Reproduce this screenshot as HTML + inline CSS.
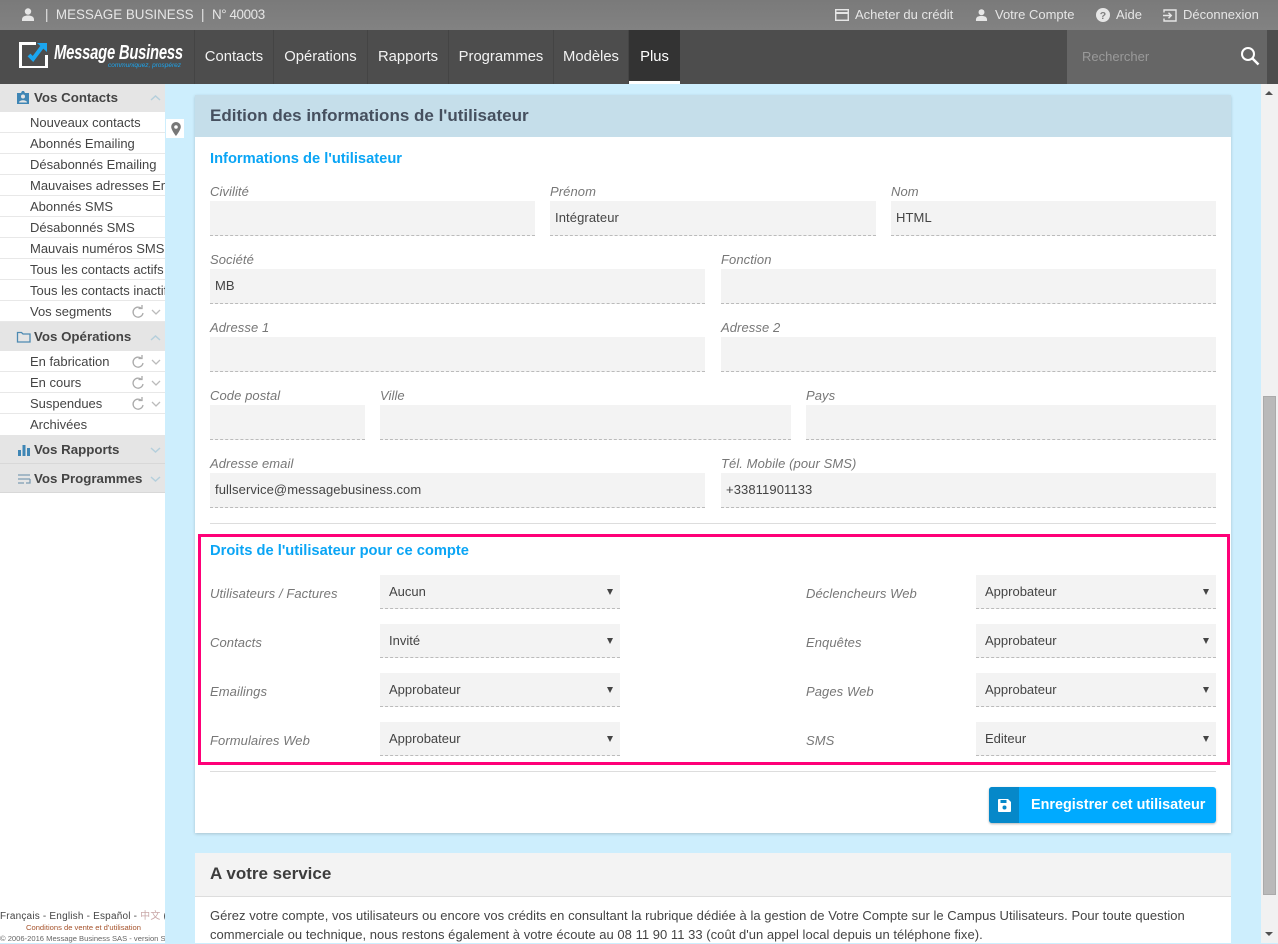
<!DOCTYPE html>
<html lang="fr"><head><meta charset="utf-8"><title>Message Business</title>
<style>
html,body{margin:0;padding:0;width:1278px;height:943px;overflow:hidden;background:#cdeefd;font-family:"Liberation Sans","Noto Sans CJK SC",sans-serif;color:#444}
div,span,svg{position:absolute;white-space:nowrap;display:block}
span.i{position:static;display:inline}
.top{color:#e6e6e6;font-size:13px;line-height:30px;top:0;height:30px}
.nav{top:30px;height:54px;line-height:55px;color:#f2f2f2;font-size:14.8px;border-right:1px solid #444;text-align:center}
.sh{left:0;width:165px;height:28px;background:#e5e5e5;border-bottom:1px solid #d8d8d8;box-sizing:content-box;font-weight:bold;font-size:13.3px;color:#444;line-height:27px;text-indent:34px}
.si{left:0;width:165px;height:20px;border-bottom:1px solid #e8e8e8;line-height:22px;font-size:13px;color:#444;text-indent:30px;overflow:hidden;background:#fff}
.l{font-style:italic;font-size:13px;color:#777;line-height:16px;height:16px;margin-top:1px;letter-spacing:.08px}
.f{height:34px;background:#f3f3f3;border-bottom:1px dashed #bbb;font-size:13px;color:#444;line-height:33px;text-indent:5px;letter-spacing:.1px}
.s{width:240px;height:33px;background:#f3f3f3;border-bottom:1px dashed #bbb;font-size:13px;color:#444;line-height:34px;text-indent:9px}
.s:after{content:"";position:absolute;right:7px;top:14px;border-left:3.5px solid transparent;border-right:3.5px solid transparent;border-top:6px solid #444}
.t{font-weight:bold;font-size:14.7px;color:#0aa5f5;line-height:18px;height:18px}
.hr{height:1px;background:#ddd;left:210px;width:1006px}
</style></head><body>

<!-- sidebar -->
<div style="left:0;top:84px;width:165px;height:859px;background:#fff;overflow:hidden"></div>
<div class="sh" style="top:84px">Vos Contacts</div>
<div class="si" style="top:112px">Nouveaux contacts</div>
<div class="si" style="top:133px">Abonnés Emailing</div>
<div class="si" style="top:154px">Désabonnés Emailing</div>
<div class="si" style="top:175px">Mauvaises adresses Emailing</div>
<div class="si" style="top:196px">Abonnés SMS</div>
<div class="si" style="top:217px">Désabonnés SMS</div>
<div class="si" style="top:238px">Mauvais numéros SMS</div>
<div class="si" style="top:259px">Tous les contacts actifs</div>
<div class="si" style="top:280px">Tous les contacts inactifs</div>
<div class="si" style="top:301px">Vos segments</div>
<div class="sh" style="top:322px;height:29px;line-height:29px">Vos Opérations</div>
<div class="si" style="top:351px">En fabrication</div>
<div class="si" style="top:372px">En cours</div>
<div class="si" style="top:393px">Suspendues</div>
<div class="si" style="top:414px;border-bottom:0">Archivées</div>
<div class="sh" style="top:435px;line-height:29px">Vos Rapports</div>
<div class="sh" style="top:464px;line-height:29px">Vos Programmes</div>

<!-- sidebar icons -->
<svg style="left:0;top:84px" width="165" height="420" viewBox="0 0 165 420" fill="none">
<path d="M17 9h4l1-2h2l1 2h4v11H17z" fill="#3f86b5"/><circle cx="23" cy="12.500" r="2" fill="#e5e5e5"/><path d="M19 18.500c0-3 8-3 8 0z" fill="#e5e5e5"/>
<path d="M151 16l4.500-4 4.500 4" stroke="#b5cfdc" stroke-width="1.500"/>
<path d="M17.500 258v-9.500h4l1.500 1.500h7v8z" stroke="#4d8ab2" stroke-width="1.300"/>
<path d="M151 256l4.500-4 4.500 4" stroke="#b5cfdc" stroke-width="1.500"/>
<path d="M18 372h3v-6h-3zM22.500 372h3v-11h-3zM27 372h3v-8h-3z" fill="#3f86b5"/>
<path d="M151 364l4.500 4 4.500-4" stroke="#b5cfdc" stroke-width="1.500"/>
<path d="M18 391h12M18 395h12M18 399h6M30 395v4h-4" stroke="#7d9db3" stroke-width="1.300"/>
<path d="M151 393l4.500 4 4.500-4" stroke="#b5cfdc" stroke-width="1.500"/>
<g stroke="#aaa" stroke-width="1.300">
<path d="M143 229a5 5 0 1 1-1.500-4.500M142 221v3.500h-3.500"/>
<path d="M143 279a5 5 0 1 1-1.500-4.500M142 271v3.500h-3.500"/>
<path d="M143 300a5 5 0 1 1-1.500-4.500M142 292v3.500h-3.500"/>
<path d="M143 321a5 5 0 1 1-1.500-4.500M142 313v3.500h-3.500"/>
<path d="M152 226l4 4 4-4M152 276l4 4 4-4M152 297l4 4 4-4M152 318l4 4 4-4" stroke="#bbb"/>
</g>
</svg>

<!-- sidebar footer -->
<div style="left:0;top:909px;width:165px;height:34px;overflow:hidden;background:#fff;font-size:9.500px;color:#444">
<div style="left:0;top:1px;line-height:13px;font-size:10px;letter-spacing:.2px">Français - English - Español - <span class="i" style="color:#c9a7a7">中文</span> (</div>
<div style="left:26px;top:13px;line-height:11px;font-size:7.600px;color:#a5522b">Conditions de vente et d'utilisation</div>
<div style="left:0;top:24px;line-height:11px;font-size:7.600px;color:#666">© 2006-2016 Message Business SAS - version S</div>
</div>

<!-- pin tab -->
<div style="left:166px;top:119px;width:18px;height:19px;background:#fff"></div>
<svg style="left:170px;top:122px" width="12" height="14" viewBox="0 0 12 14"><path d="M6 0a4.800 4.800 0 0 1 4.800 4.800C10.800 8 6 14 6 14S1.200 8 1.200 4.800A4.800 4.800 0 0 1 6 0z" fill="#777"/><circle cx="6" cy="5" r="1.800" fill="#fff"/></svg>

<!-- main panel -->
<div style="left:195px;top:95px;width:1036px;height:738px;background:#fff;box-shadow:0 1px 3px rgba(0,0,0,.18)"></div>
<div style="left:195px;top:95px;width:1036px;height:42px;background:#c5deea;line-height:41px;font-weight:bold;font-size:17px;color:#46505f;text-indent:15px">Edition des informations de l'utilisateur</div>
<div class="t" style="left:210px;top:150px">Informations de l'utilisateur</div>

<div class="l" style="left:210px;top:183px">Civilité</div><div class="f" style="left:210px;top:201px;width:325px"></div>
<div class="l" style="left:550px;top:183px">Prénom</div><div class="f" style="left:550px;top:201px;width:326px">Intégrateur</div>
<div class="l" style="left:891px;top:183px">Nom</div><div class="f" style="left:891px;top:201px;width:325px">HTML</div>

<div class="l" style="left:210px;top:251px">Société</div><div class="f" style="left:210px;top:269px;width:495px">MB</div>
<div class="l" style="left:721px;top:251px">Fonction</div><div class="f" style="left:721px;top:269px;width:495px"></div>

<div class="l" style="left:210px;top:319px">Adresse 1</div><div class="f" style="left:210px;top:337px;width:495px"></div>
<div class="l" style="left:721px;top:319px">Adresse 2</div><div class="f" style="left:721px;top:337px;width:495px"></div>

<div class="l" style="left:210px;top:387px">Code postal</div><div class="f" style="left:210px;top:405px;width:155px"></div>
<div class="l" style="left:380px;top:387px">Ville</div><div class="f" style="left:380px;top:405px;width:411px"></div>
<div class="l" style="left:806px;top:387px">Pays</div><div class="f" style="left:806px;top:405px;width:410px"></div>

<div class="l" style="left:210px;top:455px">Adresse email</div><div class="f" style="left:210px;top:473px;width:495px">fullservice@messagebusiness.com</div>
<div class="l" style="left:721px;top:455px">Tél. Mobile (pour SMS)</div><div class="f" style="left:721px;top:473px;width:495px">+33811901133</div>

<div class="hr" style="top:523px"></div>
<div style="left:198px;top:534px;width:1026px;height:225px;border:3px solid #ff0078"></div>
<div class="t" style="left:210px;top:542px">Droits de l'utilisateur pour ce compte</div>

<div class="l" style="left:210px;top:585px">Utilisateurs / Factures</div><div class="s" style="left:380px;top:575px">Aucun</div>
<div class="l" style="left:210px;top:634px">Contacts</div><div class="s" style="left:380px;top:624px">Invité</div>
<div class="l" style="left:210px;top:683px">Emailings</div><div class="s" style="left:380px;top:673px">Approbateur</div>
<div class="l" style="left:210px;top:732px">Formulaires Web</div><div class="s" style="left:380px;top:722px">Approbateur</div>
<div class="l" style="left:806px;top:585px">Déclencheurs Web</div><div class="s" style="left:976px;top:575px">Approbateur</div>
<div class="l" style="left:806px;top:634px">Enquêtes</div><div class="s" style="left:976px;top:624px">Approbateur</div>
<div class="l" style="left:806px;top:683px">Pages Web</div><div class="s" style="left:976px;top:673px">Approbateur</div>
<div class="l" style="left:806px;top:732px">SMS</div><div class="s" style="left:976px;top:722px">Editeur</div>

<div class="hr" style="top:771px"></div>
<div style="left:989px;top:787px;width:227px;height:36px;background:#00aaff;border-radius:3px;box-shadow:0 1px 2px rgba(0,0,0,.3);overflow:hidden">
<div style="left:0;top:0;width:30px;height:36px;background:#0688c9"></div>
<div style="left:42px;top:0;line-height:36px;color:#fff;font-weight:bold;font-size:14.400px">Enregistrer cet utilisateur</div>
</div>
<svg style="left:998px;top:799px" width="13" height="13" viewBox="0 0 13 13"><path d="M0 1a1 1 0 0 1 1-1h9l3 3v9a1 1 0 0 1-1 1H1a1 1 0 0 1-1-1z" fill="#fff"/><rect x="2.500" y="1" width="6" height="3" fill="#0688c9"/><circle cx="6.500" cy="8.500" r="2" fill="#0688c9"/></svg>

<!-- second panel -->
<div style="left:195px;top:853px;width:1036px;height:90px;background:#fff"></div>
<div style="left:195px;top:853px;width:1036px;height:43px;background:#f3f3f3;border-bottom:1px solid #ddd;line-height:42px;font-weight:bold;font-size:17px;color:#3d3d3d;text-indent:15px">A votre service</div>
<div style="left:210px;top:906px;width:1006px;font-size:13px;line-height:19px;color:#444;letter-spacing:.03px">
<div style="left:0;top:0">Gérez votre compte, vos utilisateurs ou encore vos crédits en consultant la rubrique dédiée à la gestion de Votre Compte sur le Campus Utilisateurs. Pour toute question</div>
<div style="left:0;top:19px">commerciale ou technique, nous restons également à votre écoute au 08 11 90 11 33 (coût d'un appel local depuis un téléphone fixe).</div>
</div>

<!-- scrollbar -->
<div style="left:1261px;top:84px;width:17px;height:859px;background:#f1f1f1"></div>
<div style="left:1263px;top:396px;width:13px;height:499px;background:#b9b9b9;border:1px solid #aaa;box-sizing:border-box"></div>
<div style="left:1265px;top:91px;border-left:4px solid transparent;border-right:4px solid transparent;border-bottom:4px solid #505050;width:0;height:0"></div>
<div style="left:1265px;top:932px;border-left:4px solid transparent;border-right:4px solid transparent;border-top:4px solid #505050;width:0;height:0"></div>

<!-- top bar -->
<div style="left:0;top:0;width:1278px;height:30px;background:linear-gradient(#7a7a7a,#828282)"></div>
<svg style="left:21px;top:8px" width="14" height="13" viewBox="0 0 14 13" fill="#e6e6e6"><circle cx="7" cy="3.500" r="3.200"/><path d="M1 13v-1.500C1 8.500 4 7.500 7 7.500s6 1 6 4V13z"/></svg>
<div class="top" style="left:45px;font-size:13.400px">|&nbsp;&nbsp;MESSAGE BUSINESS&nbsp;&nbsp;|&nbsp;&nbsp;<span class="i" style="letter-spacing:-.4px">N° 40003</span></div>
<svg style="left:835px;top:9px" width="14" height="12" viewBox="0 0 14 12" fill="none" stroke="#e6e6e6" stroke-width="1.500"><rect x=".7" y=".7" width="12.600" height="10.600"/><path d="M.7 4h12.600" stroke-width="2"/></svg>
<div class="top" style="left:855px">Acheter du crédit</div>
<svg style="left:975px;top:9px" width="13" height="12" viewBox="0 0 14 13" fill="#e6e6e6"><circle cx="7" cy="3.500" r="3.200"/><path d="M1 13v-1.500C1 8.500 4 7.500 7 7.500s6 1 6 4V13z"/></svg>
<div class="top" style="left:995px">Votre Compte</div>
<svg style="left:1096px;top:8px" width="14" height="14" viewBox="0 0 14 14"><circle cx="7" cy="7" r="7" fill="#e6e6e6"/><text x="7" y="11" text-anchor="middle" font-size="10.500" font-weight="bold" font-family="Liberation Sans" fill="#808080">?</text></svg>
<div class="top" style="left:1116px">Aide</div>
<svg style="left:1163px;top:9px" width="14" height="13" viewBox="0 0 14 13" fill="none" stroke="#e6e6e6" stroke-width="1.400"><path d="M1 3.500V1h12v11H1V9.500M0 6.500h8M5.500 3.800l2.800 2.700-2.800 2.700"/></svg>
<div class="top" style="left:1183px">Déconnexion</div>

<!-- nav -->
<div style="left:0;top:30px;width:1278px;height:54px;background:#4d4d4d"></div>
<svg style="left:19px;top:42px" width="30" height="26" viewBox="0 0 30 26" fill="none"><path d="M17 1.500H1.500v24h26V13" stroke="#fff" stroke-width="3"/><path d="M10 13l4 4 9-12" stroke="#1ba6f0" stroke-width="4"/><path d="M18 1h10v9z" fill="#1ba6f0"/></svg>
<div style="left:54px;top:40px;font-size:20px;line-height:26px;font-weight:bold;font-style:italic;color:#fff;letter-spacing:-.3px;transform:scaleX(.74);transform-origin:0 0">Message Business</div>
<div style="left:108px;top:62px;font-size:6.500px;line-height:8px;font-style:italic;color:#1ba6f0">communiquez, prospérez</div>
<div style="left:194px;top:30px;width:1px;height:54px;background:#444"></div>
<div class="nav" style="left:195px;width:78px">Contacts</div>
<div class="nav" style="left:274px;width:93px">Opérations</div>
<div class="nav" style="left:368px;width:80px">Rapports</div>
<div class="nav" style="left:449px;width:104px">Programmes</div>
<div class="nav" style="left:554px;width:74px">Modèles</div>
<div class="nav" style="left:629px;width:51px;background:#333;border:0;box-sizing:border-box;height:54px;color:#fff">Plus</div>
<div style="left:629px;top:81px;width:51px;height:3px;background:#fff"></div>
<div style="left:1067px;top:30px;width:200px;height:54px;background:#666"></div>
<div style="left:1082px;top:30px;line-height:53px;font-size:13px;color:#9a9a9a">Rechercher</div>
<svg style="left:1240px;top:46px" width="20" height="20" viewBox="0 0 20 20" fill="none" stroke="#fff" stroke-width="2"><circle cx="8" cy="8" r="6"/><path d="M12.500 12.500l6 6" stroke-width="2.500"/></svg>
</body></html>
